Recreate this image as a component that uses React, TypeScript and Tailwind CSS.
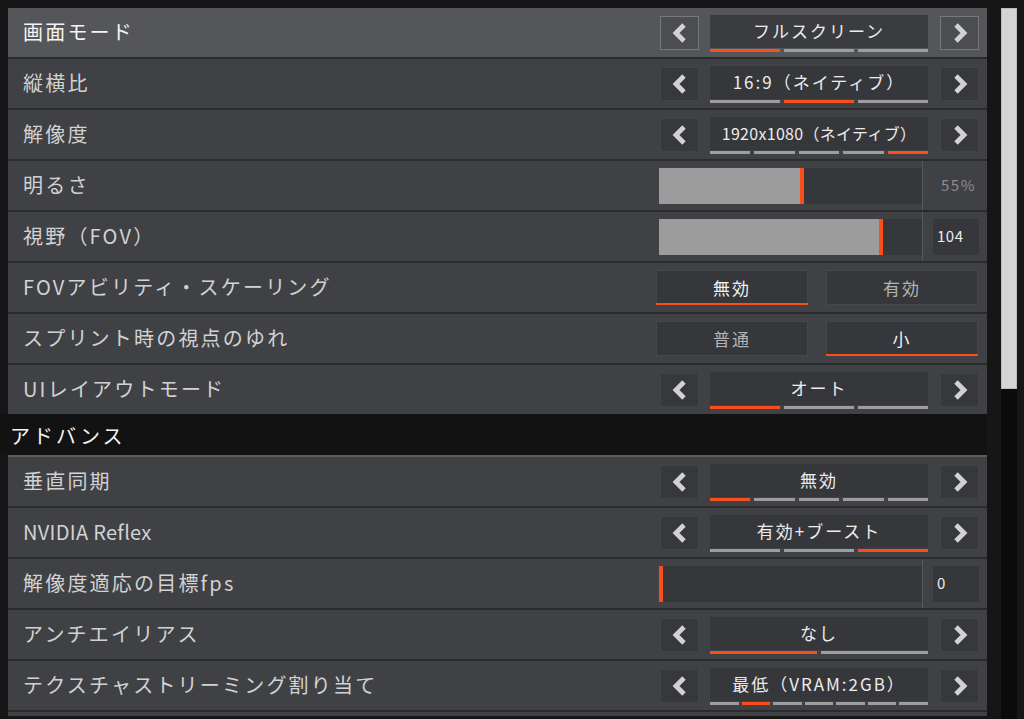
import React from "react";

const ORANGE = "#fa4f1c";
const FONT = { fontFamily: '"Noto Sans CJK JP", "Noto Sans", sans-serif' };

function Chevron({ dir }: { dir: "l" | "r" }) {
  const pts = dir === "l" ? "12,2 4,10 12,18" : "4,2 12,10 4,18";
  return (
    <svg width="16" height="20" viewBox="0 0 16 20">
      <polyline points={pts} fill="none" stroke="#d2d2d2" strokeWidth="4.8" strokeLinejoin="miter" strokeLinecap="butt" />
    </svg>
  );
}

function ArrowBtn({ dir, hl }: { dir: "l" | "r"; hl?: boolean }) {
  return (
    <div
      className={
        "w-[39px] h-[34px] flex items-center justify-center border " +
        (hl ? "bg-[#4c4d51] border-[#76777a]" : "bg-[#37383c] border-[#424347]")
      }
    >
      <Chevron dir={dir} />
    </div>
  );
}

function Selector({
  value,
  count,
  sel,
  hl,
  small,
  gap = 4,
}: {
  value: string;
  count: number;
  sel: number;
  hl?: boolean;
  small?: boolean;
  gap?: number;
}) {
  return (
    <div className="flex items-center pl-[4px]">
      <ArrowBtn dir="l" hl={hl} />
      <div className="ml-[11px] w-[218px] flex flex-col pt-[1px]">
        <div
          className={
            "h-[33px] flex items-center justify-center text-[#ececec] " +
            (small ? "text-[16px] tracking-[0.3px]" : "text-[17px] tracking-[2px]") +
            (hl ? " bg-[#3b3c40]" : " bg-[#36373b]")
          }
        >
          {value}
        </div>
        <div className="flex mt-[1px]" style={{ gap: gap }}>
          {Array.from({ length: count }).map((_, i) => (
            <div
              key={i}
              className="flex-1 h-[3px]"
              style={{ background: i === sel ? ORANGE : "#9d9d9d" }}
            />
          ))}
        </div>
      </div>
      <div className="ml-[12px]">
        <ArrowBtn dir="r" hl={hl} />
      </div>
    </div>
  );
}

function Slider({ pct, value, boxed }: { pct: number; value: string; boxed?: boolean }) {
  return (
    <div className="flex items-stretch h-full">
      <div className="pl-[3px] flex items-center">
        <div className="w-[263px] h-[36px] bg-[#36373b] relative flex">
          {pct > 0 && <div className="h-full bg-[#9c9c9c]" style={{ width: `${pct}%` }} />}
          <div className="h-full w-[4px]" style={{ background: ORANGE, marginLeft: pct > 0 ? -4 : 0 }} />
        </div>
      </div>
      <div className="w-[1px] bg-[#58595c]" />
      <div className="flex-1 flex items-center">
        {boxed ? (
          <div className="ml-[10px] w-[46px] h-[36px] bg-[#36373b] flex items-center pl-[4px] text-[15px] tracking-[0.5px] text-[#ececec]">
            {value}
          </div>
        ) : (
          <div className="ml-[18px] text-[15px] tracking-[1.5px] text-[#8d8d8d]">{value}</div>
        )}
      </div>
    </div>
  );
}

function Toggle({ options, sel }: { options: string[]; sel: number }) {
  return (
    <div className="flex gap-[18px]">
      {options.map((o, i) => (
        <div
          key={o}
          className={
            "w-[152px] h-[35px] bg-[#36373b] border border-[#46474a] flex items-center justify-center text-[17px] tracking-[2px] relative " +
            (i === sel ? "text-[#f2f2f2]" : "text-[#b4b4b4]")
          }
        >
          {o}
          {i === sel && (
            <div className="absolute left-[-1px] right-[-1px] bottom-[-1px] h-[2px]" style={{ background: ORANGE }} />
          )}
        </div>
      ))}
    </div>
  );
}

function Row({
  label,
  hl,
  last,
  latin,
  children,
}: {
  label: string;
  hl?: boolean;
  last?: boolean;
  latin?: boolean;
  children: React.ReactNode;
}) {
  return (
    <div
      className={
        "flex items-center " +
        (last ? "h-[49px] " : "h-[51px] border-b-2 border-[#2a2b2d] ") +
        (hl ? "bg-[#55565a]" : "bg-[#404145]")
      }
    >
      <div
        className={
          "pl-[15px] flex-1 text-[20px] pb-[2px] " +
          (latin ? "tracking-[0.3px] " : "tracking-[2.2px] ") +
          (hl ? "text-[#f4f4f4]" : "text-[#d2d2d2]")
        }
      >
        {label}
      </div>
      <div className="w-[324px] mr-[7px] h-full flex items-center">
        <div className="w-full h-full flex items-center">{children}</div>
      </div>
    </div>
  );
}

export default function App() {
  return (
    <div className="w-[1024px] h-[719px] overflow-hidden bg-[#161616] flex" style={FONT}>
      <div className="ml-[8px] w-[979px] pt-[8px] flex flex-col">
        <div className="flex flex-col">
          <Row label="画面モード" hl>
            <Selector value="フルスクリーン" count={3} sel={0} hl />
          </Row>
          <Row label="縦横比">
            <Selector value="16:9（ネイティブ）" count={3} sel={1} />
          </Row>
          <Row label="解像度">
            <Selector value="1920x1080（ネイティブ）" count={5} sel={4} small />
          </Row>
          <Row label="明るさ">
            <Slider pct={55} value="55%" />
          </Row>
          <Row label="視野（FOV）">
            <Slider pct={85} value="104" boxed />
          </Row>
          <Row label="FOVアビリティ・スケーリング">
            <Toggle options={["無効", "有効"]} sel={0} />
          </Row>
          <Row label="スプリント時の視点のゆれ">
            <Toggle options={["普通", "小"]} sel={1} />
          </Row>
          <Row label="UIレイアウトモード" last>
            <Selector value="オート" count={3} sel={0} />
          </Row>
        </div>
        <div className="h-[41px] flex items-center text-[20px] tracking-[3px] text-[#f4f4f4] ml-[-8px] pl-[10px] bg-[#121212] pt-[2px]">
          アドバンス
        </div>
        <div className="border-t-2 border-[#5c5c5c] flex flex-col">
          <Row label="垂直同期">
            <Selector value="無効" count={5} sel={0} />
          </Row>
          <Row label="NVIDIA Reflex" latin>
            <Selector value="有効+ブースト" count={3} sel={2} />
          </Row>
          <Row label="解像度適応の目標fps">
            <Slider pct={0} value="0" boxed />
          </Row>
          <Row label="アンチエイリアス">
            <Selector value="なし" count={2} sel={0} />
          </Row>
          <Row label="テクスチャストリーミング割り当て">
            <Selector value="最低（VRAM:2GB）" count={7} sel={1} gap={3} />
          </Row>
          <div className="h-[4px] bg-[#404145]" />
        </div>
      </div>
      <div className="ml-[14px] mt-[8px] w-[16px] h-[711px] bg-[#0b0b0b] flex flex-col">
        <div className="h-[381px] bg-[#d4d4d4] border border-[#bdbdbd]" />
      </div>
    </div>
  );
}
